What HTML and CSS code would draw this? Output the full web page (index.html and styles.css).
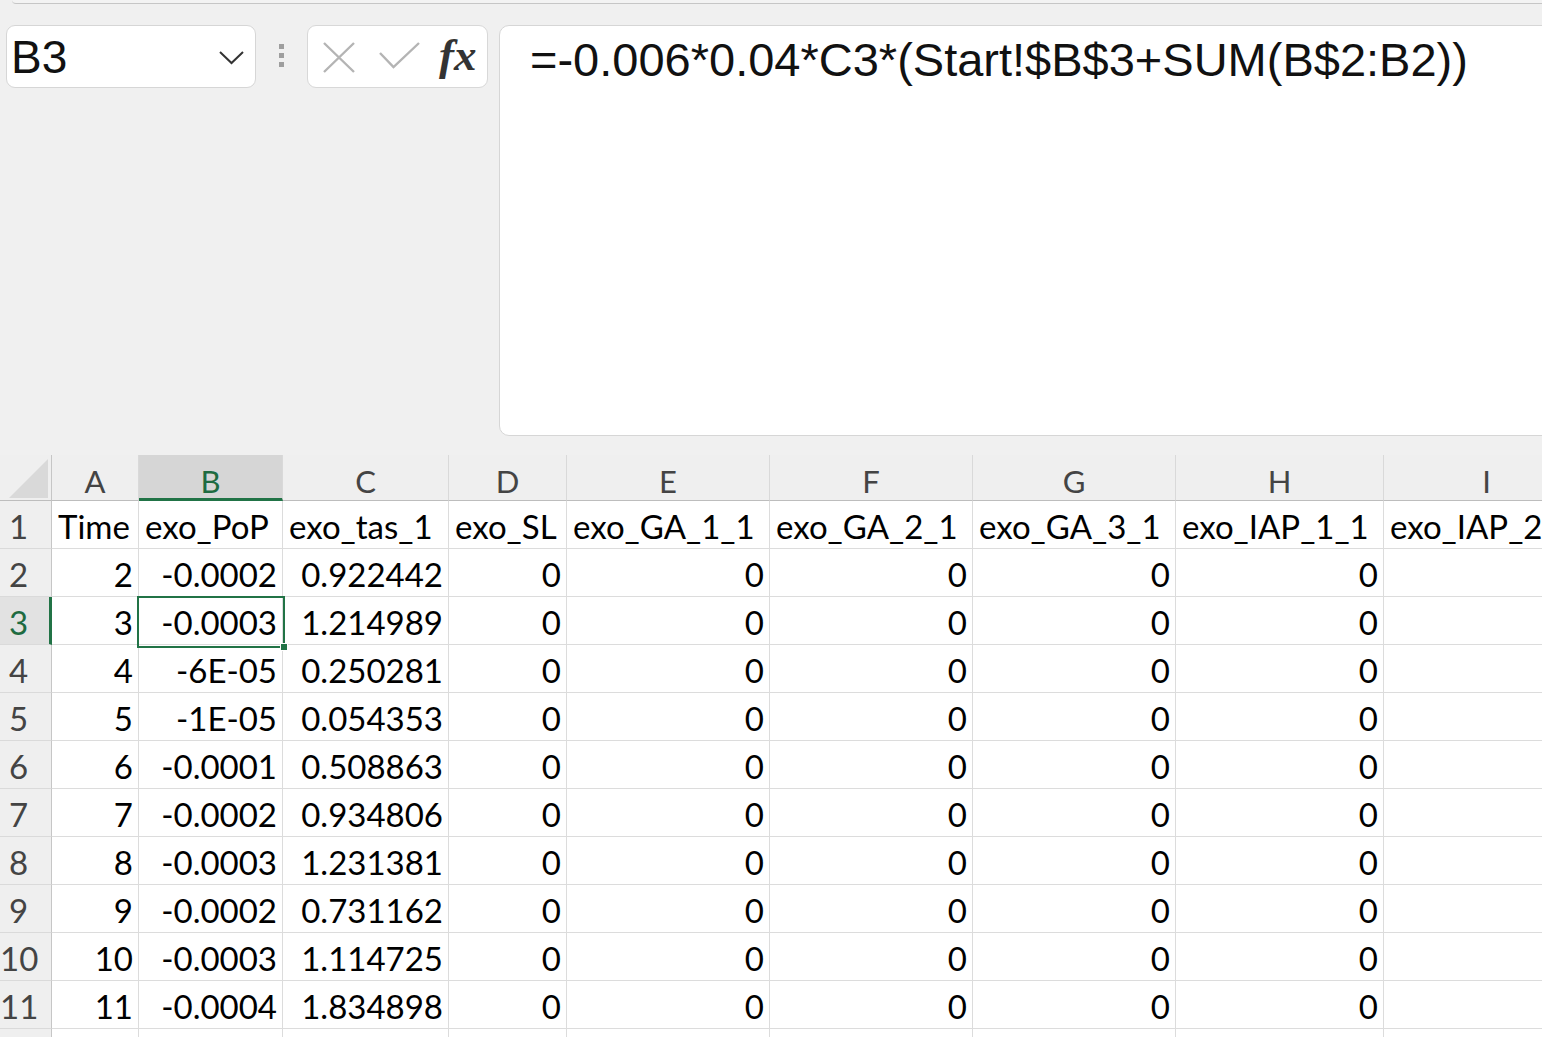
FILE: index.html
```html
<!DOCTYPE html>
<html>
<head>
<meta charset="utf-8">
<link rel="stylesheet" href="styles.css">
</head>
<body>
<div class="ribbon"></div>
<div class="toolbar">
  <div class="namebox">
    <span class="ref">B3</span>
    <svg class="chev" width="26" height="14" viewBox="0 0 26 14"><polyline points="1,1 12.5,12 24,1" fill="none" stroke="#333" stroke-width="2"/></svg>
  </div>
  <div class="grip"><i></i><i></i><i></i></div>
  <div class="fbtns">
    <svg class="xicon" width="32" height="31" viewBox="0 0 32 31"><path d="M1 1 L31 30 M31 1 L1 30" stroke="#b4b4b4" stroke-width="2.4" fill="none"/></svg>
    <svg class="check" width="41" height="27" viewBox="0 0 41 27"><polyline points="1,11 14.5,25 40,1" fill="none" stroke="#b4b4b4" stroke-width="2.4"/></svg>
    <span class="fx">fx</span>
  </div>
  <div class="formula">=-0.006*0.04*C3*(Start!$B$3+SUM(B$2:B2))</div>
</div>

<div class="sheet-wrap">
  <div class="sheet">
    <div class="corner"><div class="tri"></div></div>
    <div class="ch">A</div><div class="ch ch-sel">B</div><div class="ch">C</div><div class="ch">D</div><div class="ch">E</div><div class="ch">F</div><div class="ch">G</div><div class="ch">H</div><div class="ch">I</div>

    <div class="rh">1</div><div class="c">Time</div><div class="c">exo_PoP</div><div class="c">exo_tas_1</div><div class="c">exo_SL</div><div class="c">exo_GA_1_1</div><div class="c">exo_GA_2_1</div><div class="c">exo_GA_3_1</div><div class="c">exo_IAP_1_1</div><div class="c">exo_IAP_2_1</div>

    <div class="rh">2</div><div class="c n">2</div><div class="c n">-0.0002</div><div class="c n">0.922442</div><div class="c n">0</div><div class="c n">0</div><div class="c n">0</div><div class="c n">0</div><div class="c n">0</div><div class="c"></div>

    <div class="rh rh-sel">3</div><div class="c n">3</div><div class="c n">-0.0003</div><div class="c n">1.214989</div><div class="c n">0</div><div class="c n">0</div><div class="c n">0</div><div class="c n">0</div><div class="c n">0</div><div class="c"></div>

    <div class="rh">4</div><div class="c n">4</div><div class="c n">-6E-05</div><div class="c n">0.250281</div><div class="c n">0</div><div class="c n">0</div><div class="c n">0</div><div class="c n">0</div><div class="c n">0</div><div class="c"></div>

    <div class="rh">5</div><div class="c n">5</div><div class="c n">-1E-05</div><div class="c n">0.054353</div><div class="c n">0</div><div class="c n">0</div><div class="c n">0</div><div class="c n">0</div><div class="c n">0</div><div class="c"></div>

    <div class="rh">6</div><div class="c n">6</div><div class="c n">-0.0001</div><div class="c n">0.508863</div><div class="c n">0</div><div class="c n">0</div><div class="c n">0</div><div class="c n">0</div><div class="c n">0</div><div class="c"></div>

    <div class="rh">7</div><div class="c n">7</div><div class="c n">-0.0002</div><div class="c n">0.934806</div><div class="c n">0</div><div class="c n">0</div><div class="c n">0</div><div class="c n">0</div><div class="c n">0</div><div class="c"></div>

    <div class="rh">8</div><div class="c n">8</div><div class="c n">-0.0003</div><div class="c n">1.231381</div><div class="c n">0</div><div class="c n">0</div><div class="c n">0</div><div class="c n">0</div><div class="c n">0</div><div class="c"></div>

    <div class="rh">9</div><div class="c n">9</div><div class="c n">-0.0002</div><div class="c n">0.731162</div><div class="c n">0</div><div class="c n">0</div><div class="c n">0</div><div class="c n">0</div><div class="c n">0</div><div class="c"></div>

    <div class="rh">10</div><div class="c n">10</div><div class="c n">-0.0003</div><div class="c n">1.114725</div><div class="c n">0</div><div class="c n">0</div><div class="c n">0</div><div class="c n">0</div><div class="c n">0</div><div class="c"></div>

    <div class="rh">11</div><div class="c n">11</div><div class="c n">-0.0004</div><div class="c n">1.834898</div><div class="c n">0</div><div class="c n">0</div><div class="c n">0</div><div class="c n">0</div><div class="c n">0</div><div class="c"></div>

    <div class="rh"></div><div class="c"></div><div class="c"></div><div class="c"></div><div class="c"></div><div class="c"></div><div class="c"></div><div class="c"></div><div class="c"></div><div class="c"></div>

    <div class="selbox"><div class="handle"></div></div>
  </div>
</div>
</body>
</html>
```

FILE: styles.css
```css
* { box-sizing: border-box; }
html, body {
  margin: 0;
  padding: 0;
  width: 1542px;
  height: 1037px;
  overflow: hidden;
  background: #f0f0f0;
}
body { font-family: "Liberation Sans", Arial, sans-serif; color: #111; }

.ribbon {
  height: 4px;
  margin-left: 12px;
  border-bottom: 1px solid #c6c6c6;
  border-bottom-left-radius: 14px;
  background: #f3f3f3;
}

.toolbar {
  display: flex;
  align-items: flex-start;
  padding: 21px 0 0 6px;
  height: 451px;
}

.namebox {
  width: 250px;
  height: 63px;
  background: #fff;
  border: 1px solid #d6d6d6;
  border-radius: 9px;
  display: flex;
  align-items: center;
  padding: 0 10px 0 4px;
}
.ref {
  font-size: 46px;
  line-height: 52px;
  flex: 1;
  color: #111;
}
.chev { margin-top: 2px; }

.grip {
  width: 6px;
  margin: 19px 22px 0 23px;
  display: flex;
  flex-direction: column;
  gap: 4px;
}
.grip i {
  display: block;
  width: 5px;
  height: 5px;
  background: #9e9e9e;
}

.fbtns {
  width: 181px;
  height: 63px;
  background: #fff;
  border: 1px solid #d8d8d8;
  border-radius: 9px;
  display: flex;
  align-items: center;
  padding-left: 15px;
}
.xicon { margin-top: 1px; }
.check { margin-left: 24px; margin-top: -3px; }
.fx {
  margin-left: 19px;
  font-family: "Liberation Serif", "Times New Roman", serif;
  font-style: italic;
  font-weight: bold;
  font-size: 45px;
  line-height: 50px;
  color: #333;
  margin-top: -4px;
}

.formula {
  flex: 1;
  margin-left: 11px;
  margin-right: -12px;
  height: 411px;
  background: #fff;
  border: 1px solid #d6d6d6;
  border-radius: 10px;
  padding: 7px 0 0 30px;
  font-size: 47px;
  line-height: 54px;
  color: #111;
  white-space: nowrap;
}

.sheet-wrap {
  width: 1542px;
  overflow: hidden;
}
.sheet {
  position: relative;
  display: grid;
  grid-template-columns: 52px 87px 144px 166px 118px 203px 203px 203px 208px 206px;
  grid-template-rows: 46px;
  grid-auto-rows: 48px;
  width: 1590px;
  font-family: Lato, "Open Sans", sans-serif;
}

.corner {
  background: #efefef;
  border-right: 1px solid #c6c6c6;
  border-bottom: 1px solid #bdbdbd;
  position: relative;
}
.tri {
  position: absolute;
  left: 9px;
  top: 4px;
  width: 39px;
  height: 39px;
  background: #d9d9d9;
  clip-path: polygon(100% 0, 100% 100%, 0 100%);
}

.ch {
  background: #efefef;
  border-right: 1px solid #d9d9d9;
  border-bottom: 1px solid #bdbdbd;
  text-align: center;
  font-size: 31px;
  line-height: 46px;
  padding-top: 3px;
  color: #444;
}
.ch-sel {
  background: #d6d6d6;
  color: #1e6b41;
  border-bottom: 3px solid #217346;
}

.rh {
  background: #efefef;
  border-right: 1px solid #c6c6c6;
  border-bottom: 1px solid #dadada;
  text-align: center;
  padding-right: 14px;
  font-size: 33px;
  line-height: 48px;
  padding-top: 1px;
  color: #444;
}
.rh-sel {
  background: #e2e2e2;
  color: #1e6b41;
  border-right: 3px solid #217346;
  padding-right: 12px;
}

.c {
  background: #fff;
  border-right: 1px solid #dcdcdc;
  border-bottom: 1px solid #dcdcdc;
  font-size: 33px;
  line-height: 48px;
  padding: 1px 5px 0 6px;
  white-space: nowrap;
  overflow: hidden;
  color: #000;
}
.n { text-align: right; }

.selbox {
  position: absolute;
  left: 137px;
  top: 141px;
  width: 148px;
  height: 52px;
  border: 2px solid #217346;
  pointer-events: none;
}
.handle {
  position: absolute;
  right: -5px;
  bottom: -5px;
  width: 8px;
  height: 8px;
  background: #217346;
  border: 1px solid #fff;
}
```
